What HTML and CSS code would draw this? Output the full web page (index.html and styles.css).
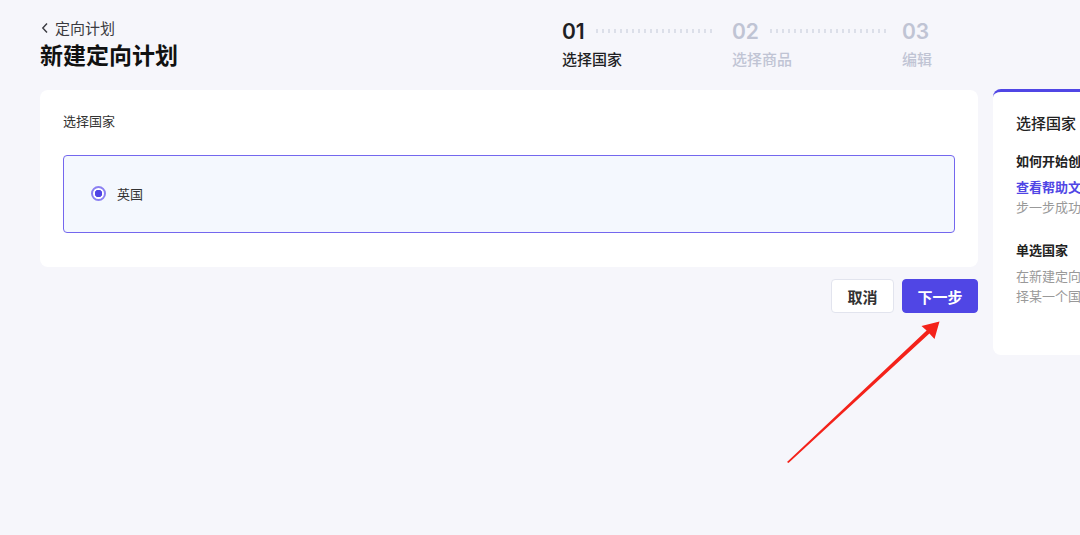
FILE: index.html
```html
<!DOCTYPE html>
<html lang="zh-CN">
<head>
    <meta charset="UTF-8">
    <meta name="viewport" content="width=device-width, initial-scale=1.0">
    <title>新建定向计划</title>
    <link rel="stylesheet" href="styles.css">
</head>
<body>
    <header class="top">
        <div class="heading">
            <a class="back" href="#">
                <svg class="chev" width="8" height="12" viewBox="0 0 8 12"><polyline points="6,1.5 1.8,6 6,10.5" fill="none" stroke="#3a3a40" stroke-width="1.4"/></svg>定向计划
            </a>
            <h1>新建定向计划</h1>
        </div>
        <ol class="steps">
            <li class="step active">
                <div class="step-num"><span>01</span><i class="dots"></i></div>
                <div class="step-name">选择国家</div>
            </li>
            <li class="step">
                <div class="step-num"><span>02</span><i class="dots"></i></div>
                <div class="step-name">选择商品</div>
            </li>
            <li class="step">
                <div class="step-num"><span>03</span></div>
                <div class="step-name">编辑</div>
            </li>
        </ol>
    </header>

    <main class="content">
        <div class="left">
            <section class="card">
                <h2 class="label">选择国家</h2>
                <label class="option">
                    <span class="radio"></span>
                    <span>英国</span>
                </label>
            </section>
            <div class="actions">
                <button class="btn">取消</button>
                <button class="btn primary">下一步</button>
            </div>
        </div>

        <aside class="help">
            <h3>选择国家</h3>
            <h4>如何开始创建定向计划</h4>
            <p><a href="#">查看帮助文档</a>，了解如何一步一步成功创建计划</p>
            <h4 class="gap">单选国家</h4>
            <p>在新建定向计划时，只能选择某一个国家</p>
        </aside>
    </main>

    <svg class="arrow" width="1080" height="535" viewBox="0 0 1080 535">
        <polygon points="787,462 926.6,330.5 921.5,326 939.5,321.5 934.5,339 929.4,333.5 788.5,463" fill="#f4221a"/>
    </svg>
</body>
</html>
```

FILE: styles.css
```css
body {
    margin: 0;
    padding: 0 0 0 40px;
    background-color: #f6f6fb;
    font-family: "Inter", "Noto Sans CJK SC", sans-serif;
    color: #1f1f24;
    min-height: 535px;
    overflow: hidden;
    position: relative;
}

/* header */
.top {
    display: flex;
    height: 71px;
    margin-bottom: 19px;
}

.heading {
    width: 522px;
    padding-top: 18px;
}

.back {
    display: flex;
    align-items: center;
    font-family: "Noto Sans CJK SC", sans-serif;
    font-size: 15px;
    line-height: 20px;
    color: #3a3a40;
    text-decoration: none;
}

.chev {
    margin: 0 6px 0 1px;
}

h1 {
    margin: 1px 0 0;
    font-size: 23px;
    line-height: 30px;
    font-weight: 700;
    color: #111;
    font-family: "Noto Sans CJK SC", sans-serif;
}

.steps {
    display: flex;
    list-style: none;
    margin: 0;
    padding: 19px 0 0;
}

.step {
    width: 170px;
    color: #c0c4d4;
}

.step.active {
    color: #1f1f24;
}

.step-num {
    display: flex;
    align-items: center;
    height: 24px;
    font-size: 21px;
    font-weight: 600;
}

.dots {
    width: 116px;
    height: 4px;
    margin-left: 11px;
    background: repeating-linear-gradient(90deg, #dcdfe9 0 2px, transparent 2px 6px);
}

.step-name {
    margin-top: 6px;
    font-size: 15px;
    line-height: 20px;
    font-weight: 500;
    font-family: "Noto Sans CJK SC", sans-serif;
}

/* content */
.content {
    display: flex;
    align-items: flex-start;
    gap: 15px;
    font-family: "Noto Sans CJK SC", sans-serif;
}

.left {
    width: 938px;
    flex-shrink: 0;
}

.card {
    background-color: #fff;
    border-radius: 8px;
    padding: 22px 23px 34px;
}

.label {
    margin: 0 0 25px;
    font-size: 13px;
    line-height: 18px;
    font-weight: 400;
    color: #333;
}

.option {
    display: flex;
    align-items: center;
    height: 74px;
    padding: 0 0 2px 28px;
    border: 1px solid #7467ee;
    border-radius: 4px;
    background-color: #f4f8fe;
    font-size: 13px;
    color: #333;
}

.radio {
    width: 11px;
    height: 11px;
    border: 2px solid #8b80f2;
    border-radius: 50%;
    margin: 0 11px 0 -1px;
    background: radial-gradient(circle, #5146e5 0 3.5px, #fff 4px);
}

.actions {
    display: flex;
    justify-content: flex-end;
    gap: 8px;
    margin-top: 12px;
}

.btn {
    height: 34px;
    width: 63px;
    border: 1px solid #e2e4ee;
    border-radius: 4px;
    background-color: #fff;
    font-family: "Noto Sans CJK SC", sans-serif;
    font-size: 15px;
    font-weight: 700;
    color: #333;
    cursor: pointer;
}

.btn.primary {
    width: 76px;
    border-color: #5046e5;
    background-color: #5046e5;
    color: #fff;
}

/* help panel */
.help {
    flex-shrink: 0;
    width: 164px;
    height: 240px;
    margin-top: -1px;
    padding: 20px 23px 3px;
    background-color: #fff;
    border-top: 3px solid #5046e5;
    border-radius: 8px;
}

.help h3 {
    margin: 0 0 18px;
    font-size: 15px;
    line-height: 22px;
    font-weight: 500;
    color: #222;
}

.help h4 {
    margin: 0 0 7px;
    font-size: 13px;
    line-height: 18px;
    font-weight: 700;
    color: #222;
}

.help h4.gap {
    margin: 24px 0 7px;
}

.help p {
    margin: 0;
    font-size: 13px;
    line-height: 20px;
    color: #999;
}

.help a {
    color: #5046e5;
    font-weight: 700;
    text-decoration: none;
}

.arrow {
    position: absolute;
    left: 0;
    top: 0;
    pointer-events: none;
}
```
